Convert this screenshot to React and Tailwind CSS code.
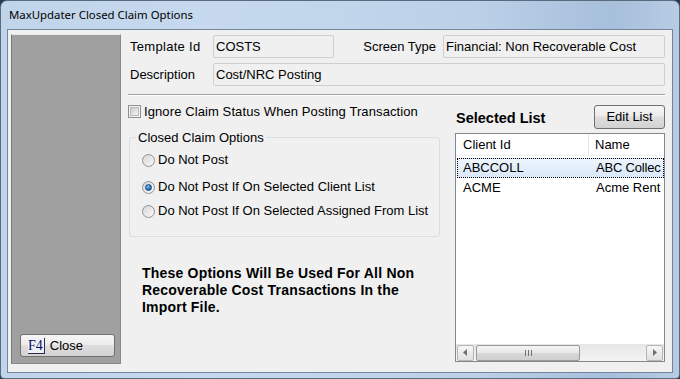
export default function App() {
  const font = { fontFamily: '"Liberation Sans", Arial, sans-serif' };
  const Radio = ({ checked }) => (
    <div className="w-[13px] h-[13px] rounded-full border border-[#929292] bg-[linear-gradient(135deg,#d6d6d6,#f9f9f9)] flex items-center justify-center shrink-0">
      {checked && (
        <div className="w-[7px] h-[7px] rounded-full bg-[radial-gradient(circle_at_40%_35%,#8ccaf5,#1a6bb8_60%,#0c3f7a)] border border-[#1c4e86]" />
      )}
    </div>
  );
  const Arrow = ({ dir }) => (
    <svg width="5" height="7" viewBox="0 0 5 7">
      {dir === "left" ? (
        <path d="M4 0 L0 3.5 L4 7 Z" fill="#707070" />
      ) : (
        <path d="M1 0 L5 3.5 L1 7 Z" fill="#707070" />
      )}
    </svg>
  );
  return (
    <div className="w-[680px] h-[379px] overflow-hidden bg-[#2b3a4a]" style={font}>
      <div className="w-[680px] h-[379px] rounded-t-[7px] rounded-b-[4px] border border-[#5a6b7e] bg-[linear-gradient(to_right,#c0d4ea,#c6d9ee_30%,#bcd1e8_70%,#a6bfdb_90%,#b8cce4)] flex flex-col">
        <div
          className="h-[28px] pl-[8px] flex items-center text-[11.4px] text-black"
          style={{ fontFamily: '"Noto Sans", "Open Sans", sans-serif' }}
        >
          MaxUpdater Closed Claim Options
        </div>
        <div className="mx-[6px] h-[344px] border border-[#75869a] bg-[#f0f0f0] flex">
          {/* Left gray panel */}
          <div className="ml-[3px] mt-[4px] w-[110px] h-[330px] border border-[#8a8a8a] border-t-[#e8e8e8] border-l-[#7a7a7a] bg-[#a0a0a0] flex flex-col justify-end pl-[8px] pb-[6px]">
            <div className="w-[95px] h-[23px] rounded-[3px] border border-[#707070] bg-[linear-gradient(to_bottom,#f6f6f6,#ececec_45%,#dedede_50%,#d2d2d2)] flex items-center pl-[7px] text-[13px]">
              <span
                className="text-[14px] leading-[15px] text-[#0b0b5c] border-b border-r border-[#2a2a4a] pr-[1px] bg-[#eef0f8]"
                style={{ fontFamily: '"Liberation Serif", serif' }}
              >
                F4
              </span>
              <span className="ml-[5px] text-black">Close</span>
            </div>
          </div>

          {/* Right content */}
          <div className="ml-[7px] w-[537px] flex flex-col text-[13px] text-black">
            {/* Row 1 */}
            <div className="mt-[5px] flex h-[23px] items-center">
              <div className="w-[85px] pl-[2px] tracking-[0.3px]">Template Id</div>
              <div className="w-[121px] h-[23px] rounded-[2px] border border-[#cfcfcf] bg-[#f0f0f0] pl-[2px] leading-[21px]">
                COSTS
              </div>
              <div className="flex-1 text-right pr-[7px]">Screen Type</div>
              <div className="w-[222px] h-[23px] rounded-[2px] border border-[#cfcfcf] bg-[#f0f0f0] pl-[2px] leading-[21px]">
                Financial: Non Recoverable Cost
              </div>
            </div>
            {/* Row 2 */}
            <div className="mt-[5px] flex h-[23px] items-center">
              <div className="w-[85px] pl-[2px]">Description</div>
              <div className="flex-1 h-[23px] rounded-[2px] border border-[#cfcfcf] bg-[#f0f0f0] pl-[2px] leading-[21px]">
                Cost/NRC Posting
              </div>
            </div>
            {/* Separator */}
            <div className="mt-[8px] h-px bg-[#a0a0a0]" />
            <div className="h-px bg-white" />

            <div className="flex">
              {/* Left column */}
              <div className="w-[312px] flex flex-col">
                <div className="mt-[9px] flex items-center h-[13px]">
                  <div className="w-[13px] h-[13px] border border-[#8f8f8f] bg-[#f4f4f4] p-[1px]">
                    <div className="w-full h-full bg-[linear-gradient(135deg,#cbcbcb,#f4f4f4)] border border-[#b8b8b8]" />
                  </div>
                  <span className="ml-[3px] leading-[13px] tracking-[0.1px]">Ignore Claim Status When Posting Transaction</span>
                </div>
                <fieldset className="mt-[12px] ml-[1px] w-[311px] rounded-[3px] border border-[#d5dfe5] px-0 pt-0 pb-[17px] m-0">
                  <legend className="ml-[6px] px-[2px] leading-[15px]">Closed Claim Options</legend>
                  <div className="mt-[7px] ml-[12px] flex items-center h-[16px]">
                    <Radio />
                    <span className="ml-[3px]">Do Not Post</span>
                  </div>
                  <div className="mt-[11px] ml-[12px] flex items-center h-[16px]">
                    <Radio checked />
                    <span className="ml-[3px]">Do Not Post If On Selected Client List</span>
                  </div>
                  <div className="mt-[8px] ml-[12px] flex items-center h-[16px]">
                    <Radio />
                    <span className="ml-[3px]">Do Not Post If On Selected Assigned From List</span>
                  </div>
                </fieldset>
                <div className="mt-[28px] pl-[14px] font-bold text-[14px] tracking-[0.2px] leading-[17px] whitespace-nowrap">
                  These Options Will Be Used For All Non
                  <br />
                  Recoverable Cost Transactions In the
                  <br />
                  Import File.
                </div>
              </div>

              {/* Right column */}
              <div className="ml-[15px] w-[210px] flex flex-col">
                <div className="mt-[9px] flex items-center h-[24px]">
                  <div className="flex-1 pl-[1px] pt-[3px] font-bold text-[14.5px]">Selected List</div>
                  <div className="w-[71px] h-[24px] rounded-[3px] border border-[#707070] bg-[linear-gradient(to_bottom,#f6f6f6,#ececec_45%,#dedede_50%,#d2d2d2)] flex items-center justify-center">
                    Edit List
                  </div>
                </div>
                <div className="mt-[4px] h-[229px] border border-[#828790] bg-white flex flex-col overflow-hidden">
                  <div className="h-[22px] flex border-b border-[#f0f0f0] shrink-0">
                    <div className="w-[133px] pl-[7px] leading-[21px] border-r border-[#e5e5e5]">Client Id</div>
                    <div className="pl-[6px] leading-[21px]">Name</div>
                  </div>
                  <div className="mt-[2px] ml-[1px] h-[20px] flex border border-dotted border-black bg-[linear-gradient(to_bottom,#eef5fd,#d9e8f9)] whitespace-nowrap shrink-0">
                    <div className="w-[132px] shrink-0 pl-[5px] leading-[18px]">ABCCOLL</div>
                    <div className="pl-[6px] leading-[18px] tracking-[-0.2px]">ABC Collec</div>
                  </div>
                  <div className="ml-[1px] h-[20px] flex whitespace-nowrap shrink-0">
                    <div className="w-[133px] shrink-0 pl-[6px] leading-[20px]">ACME</div>
                    <div className="pl-[6px] leading-[20px]">Acme Rent</div>
                  </div>
                  <div className="flex-1" />
                  <div className="h-[17px] shrink-0 flex items-center bg-[linear-gradient(to_bottom,#e6e6e6,#f4f4f4)] px-[1px] gap-[2px]">
                    <div className="w-[17px] h-[16px] rounded-[2px] border border-[#b5b5b5] bg-[linear-gradient(to_bottom,#f6f6f6,#e0e0e0)] flex items-center justify-center">
                      <Arrow dir="left" />
                    </div>
                    <div className="w-[104px] h-[16px] rounded-[2px] border border-[#9a9a9a] bg-[linear-gradient(to_bottom,#f4f4f4,#e8e8e8_50%,#d8d8d8_51%,#cfcfcf)] flex items-center justify-center gap-[2px]">
                      <div className="w-px h-[6px] bg-[#6f6f6f]" />
                      <div className="w-px h-[6px] bg-[#6f6f6f]" />
                      <div className="w-px h-[6px] bg-[#6f6f6f]" />
                    </div>
                    <div className="flex-1" />
                    <div className="w-[17px] h-[16px] rounded-[2px] border border-[#b5b5b5] bg-[linear-gradient(to_bottom,#f6f6f6,#e0e0e0)] flex items-center justify-center">
                      <Arrow dir="right" />
                    </div>
                  </div>
                </div>
              </div>
            </div>
          </div>
        </div>
      </div>
    </div>
  );
}
